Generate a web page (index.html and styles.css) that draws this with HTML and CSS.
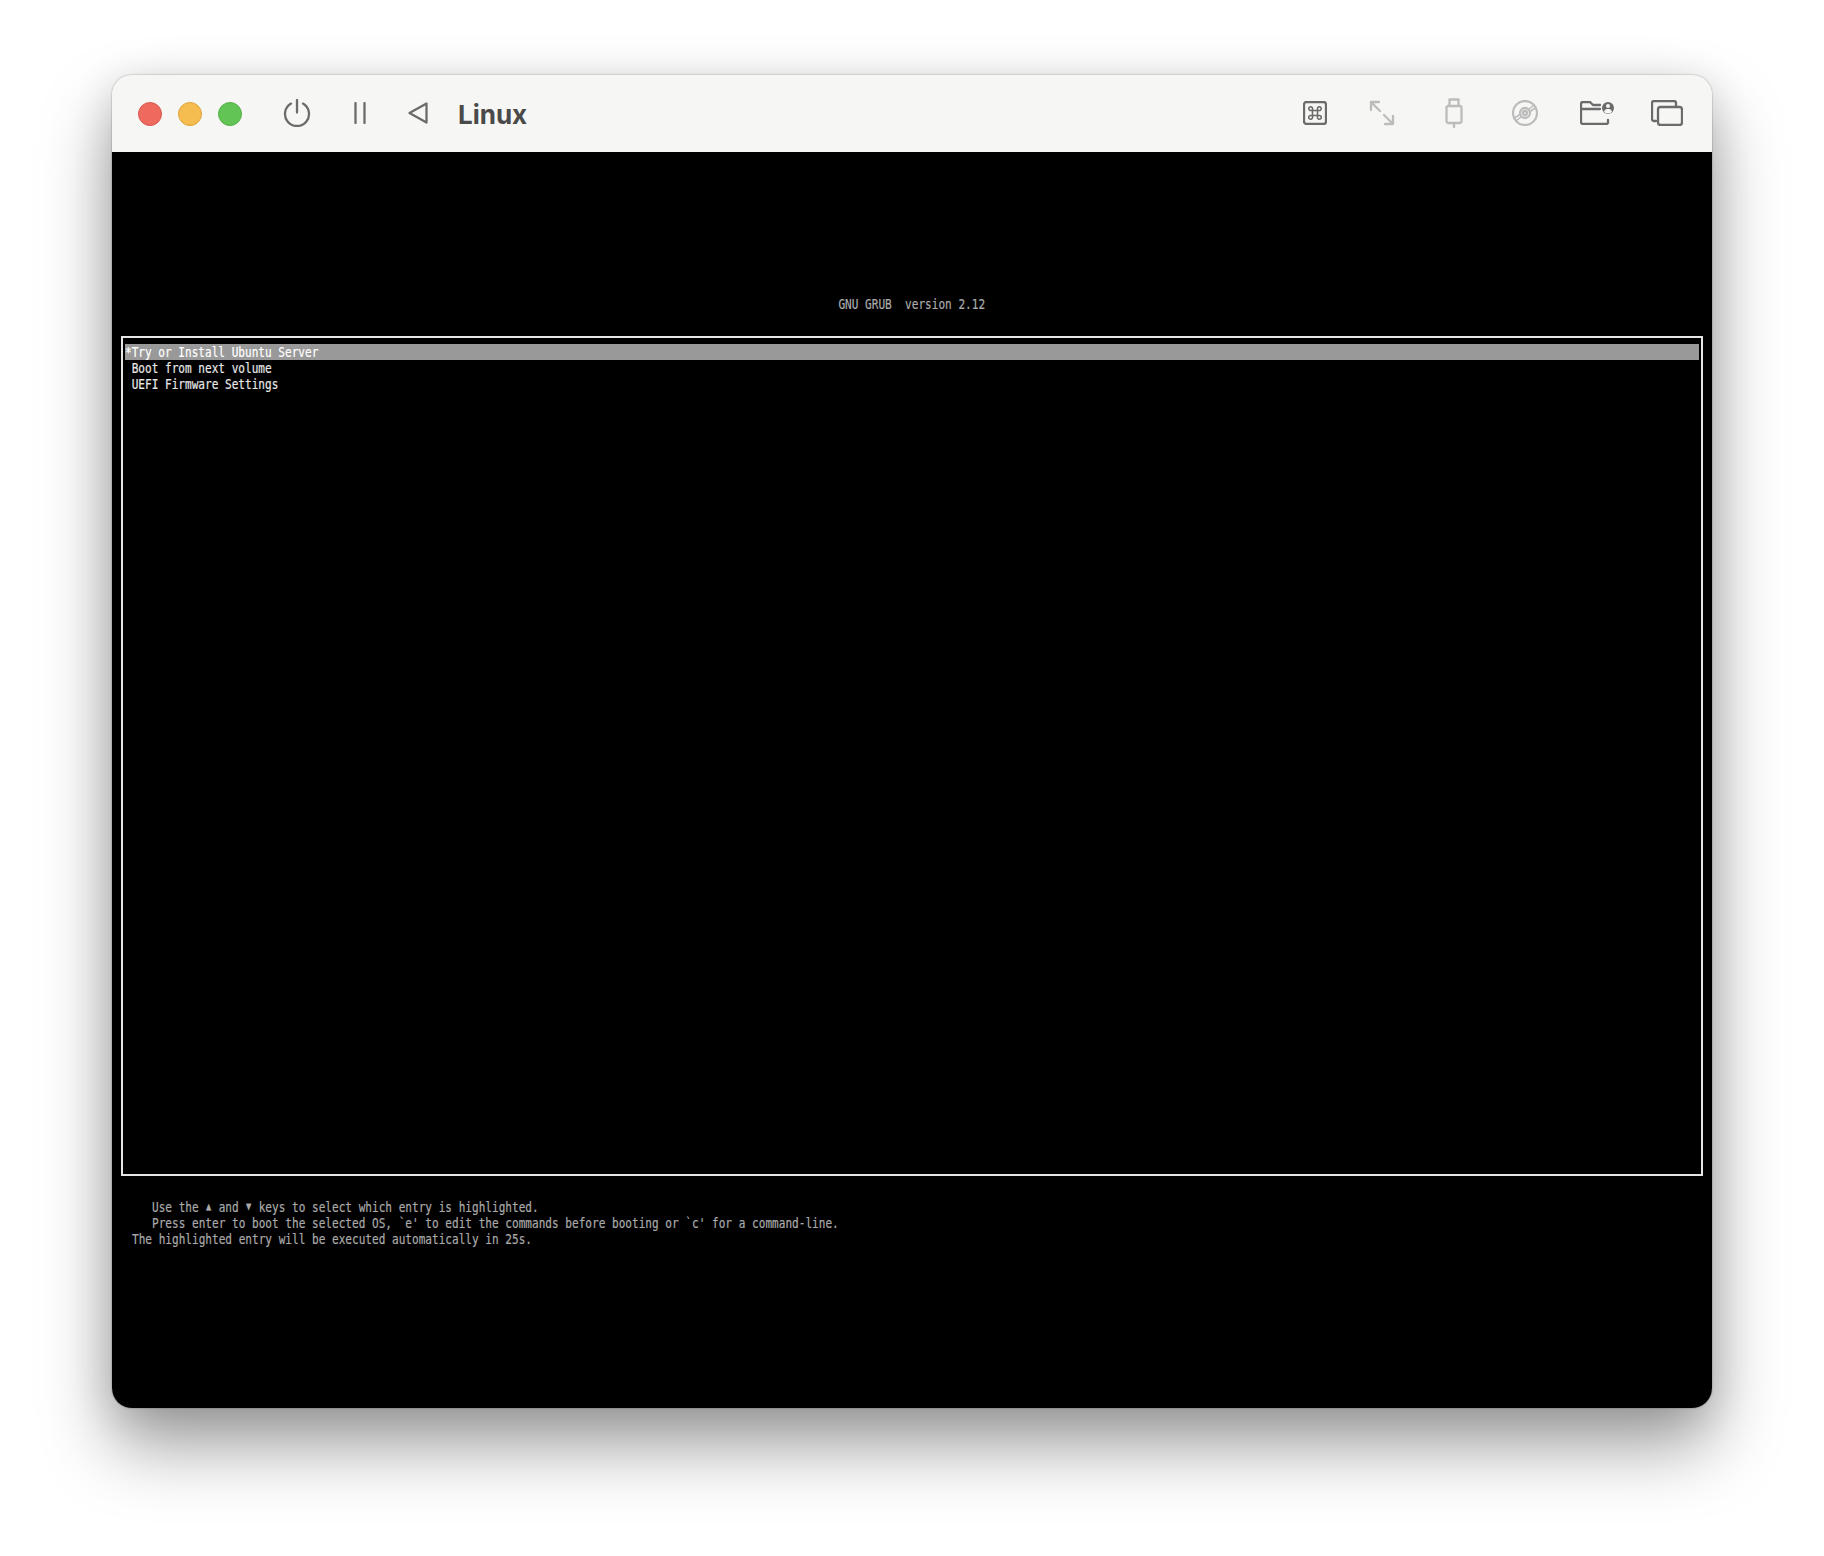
FILE: index.html
```html
<!DOCTYPE html>
<html lang="en">
<head>
<meta charset="utf-8">
<title>Linux</title>
<link rel="stylesheet" href="styles.css">
</head>
<body>
<main class="window">
  <header class="titlebar">
    <div class="lights">
      <span class="light red"></span>
      <span class="light yellow"></span>
      <span class="light green"></span>
    </div>
    <svg class="icon power" viewBox="0 0 28 28"><path d="M14 1v12.500M8 4.600a12 12 0 1 0 12 0"/></svg>
    <svg class="icon pause" viewBox="0 0 12 22"><path d="M1.500 1v20M10.500 1v20"/></svg>
    <svg class="icon back" viewBox="0 0 20 22"><path d="M18.500 1.500v19L1.500 11z"/></svg>
    <h1 class="name">Linux</h1>
    <div class="tools">
      <svg class="icon cmd" viewBox="0 0 24 24"><rect x="1" y="1" width="22" height="22" rx="2.500"/><path class="thin" d="M9.500 9.500h5v5h-5zM9.500 9.500H8a1.900 1.900 0 1 1 1.500-1.500zM14.500 9.500V8A1.900 1.900 0 1 1 16 9.500zM14.500 14.500H16a1.900 1.900 0 1 1-1.500 1.500zM9.500 14.500V16A1.900 1.900 0 1 1 8 14.500z"/></svg>
      <svg class="icon dim expand" viewBox="0 0 26 26"><path d="M2 2l9 9M2 10V2h8M24 24l-9-9M24 16v8h-8"/></svg>
      <svg class="icon dim usb" viewBox="0 0 18 30"><path d="M4.500 8V1.500h9V8M1.500 9.500a1.500 1.500 0 0 1 1.500-1.500h12a1.500 1.500 0 0 1 1.500 1.500V23a2 2 0 0 1-2 2H3.500a2 2 0 0 1-2-2zM9 25v4"/></svg>
      <svg class="icon dim disc" viewBox="0 0 26 26"><circle cx="13" cy="13" r="12"/><circle cx="13" cy="13" r="5"/><circle cx="13" cy="13" r="2"/><path class="thin" d="M16.500 9.500l5.500-4.500M18 11.500l5.500-3.500M9.500 16.500l-5.500 4.500M8 14.500l-5.500 3.500"/></svg>
      <svg class="icon folder" viewBox="0 0 34 24"><path d="M28 19v2.500a1.500 1.500 0 0 1-1.500 1.500H3a2 2 0 0 1-2-2V3a2 2 0 0 1 2-2h7l3 3h7M1 8h19"/><circle class="solid" cx="28" cy="7" r="6"/><circle class="cut" cx="28" cy="5" r="2"/><path class="cut" d="M24 11c.5-2.500 2-3 4-3s3.500.5 4 3a6 6 0 0 1-8 0z"/></svg>
      <svg class="icon windows" viewBox="0 0 32 26"><path d="M5 21H3a2 2 0 0 1-2-2V3a2 2 0 0 1 2-2h20a2 2 0 0 1 2 2v3"/><rect x="7" y="7" width="24" height="18" rx="2.500"/></svg>
    </div>
  </header>
  <section class="screen">
    <div class="row heading"><span class="glyphs">GNU GRUB  version 2.12</span></div>
    <div class="menu">
      <div class="row entry selected"><span class="glyphs">*Try or Install Ubuntu Server</span></div>
      <div class="row entry"><span class="glyphs"> Boot from next volume</span></div>
      <div class="row entry"><span class="glyphs"> UEFI Firmware Settings</span></div>
    </div>
    <div class="help">
      <div class="row"><span class="glyphs">   Use the <span class="arrow">▲</span> and <span class="arrow">▼</span> keys to select which entry is highlighted.</span></div>
      <div class="row"><span class="glyphs">   Press enter to boot the selected OS, `e' to edit the commands before booting or `c' for a command-line.</span></div>
      <div class="row"><span class="glyphs">The highlighted entry will be executed automatically in 25s.</span></div>
    </div>
  </section>
</main>
</body>
</html>
```

FILE: styles.css
```css
html, body {
  margin: 0;
  background: #fff;
}
body {
  padding: 75px 112px 148px;
  font-family: "Inter", "Liberation Sans", sans-serif;
}
.window {
  width: 1600px;
  height: 1333px;
  border-radius: 20px;
  overflow: hidden;
  display: flex;
  flex-direction: column;
  box-shadow: 0 0 1.500px rgba(0,0,0,.55), 0 38px 70px rgba(0,0,0,.38), 0 6px 40px rgba(0,0,0,.12);
}
.titlebar {
  height: 77px;
  flex: none;
  background: #f6f6f4;
  display: flex;
  align-items: center;
  padding: 0 29px 1px 26px;
  box-sizing: border-box;
}
.lights {
  display: flex;
  gap: 16px;
  margin-top: 2px;
}
.light {
  width: 24px;
  height: 24px;
  box-sizing: border-box;
  border-radius: 50%;
  border: 1px solid;
}
.red { background: #ee6a5f; border-color: #d9574d; }
.yellow { background: #f5bd4f; border-color: #dfa23a; }
.green { background: #61c454; border-color: #55ae49; }

.icon {
  flex: none;
  display: block;
  fill: none;
  stroke: #6b6b6b;
  stroke-width: 2.300;
  stroke-linecap: round;
  stroke-linejoin: round;
}
.icon .thin { stroke-width: 1.600; }
.icon .solid { fill: #6b6b6b; stroke: none; }
.icon .cut { fill: #f6f6f4; stroke: none; }
.icon.dim { stroke: #bcbcbc; }
.power { width: 28px; height: 28px; margin-left: 41px; }
.pause { width: 12px; height: 22px; margin-left: 43px; }
.back { width: 20px; height: 22px; margin-left: 42px; }
.name {
  margin: 3px 0 0 30px;
  font-size: 26px;
  font-weight: 700;
  color: #4a4a4a;
}
.tools {
  margin: 0 0 1px auto;
  display: flex;
  align-items: center;
}
.cmd { width: 24px; height: 24px; }
.expand { width: 26px; height: 26px; margin-left: 42px; }
.usb { width: 18px; height: 30px; margin-left: 50px; }
.disc { width: 26px; height: 26px; margin-left: 49px; }
.folder { width: 34px; height: 24px; margin-left: 42px; }
.windows { width: 32px; height: 26px; margin-left: 37px; }

.screen {
  flex: 1;
  background: #000;
  padding: 144px 9px 0;
}
.row {
  height: 16px;
  line-height: 16px;
  white-space: pre;
  color: #aaa;
  font-family: "DejaVu Sans Mono", "Liberation Mono", monospace;
  font-size: 14px;
}
.glyphs {
  display: inline-block;
  transform: scaleX(.791);
  transform-origin: left center;
  -webkit-text-stroke: .2px currentColor;
}
.arrow {
  display: inline-block;
  width: 8.430px;
  text-align: center;
  font-size: 11px;
  line-height: 1;
  vertical-align: 2px;
}
.heading {
  text-align: center;
}
.heading .glyphs {
  transform-origin: center;
}
.menu {
  margin-top: 24px;
  height: 840px;
  box-sizing: border-box;
  border: 2px solid #e6e6e6;
  padding: 6px 2px;
}
.entry {
  color: #e8e8e8;
}
.selected {
  background: #999;
  color: #fff;
}
.help {
  margin-top: 23px;
  padding-left: 11px;
}
```
